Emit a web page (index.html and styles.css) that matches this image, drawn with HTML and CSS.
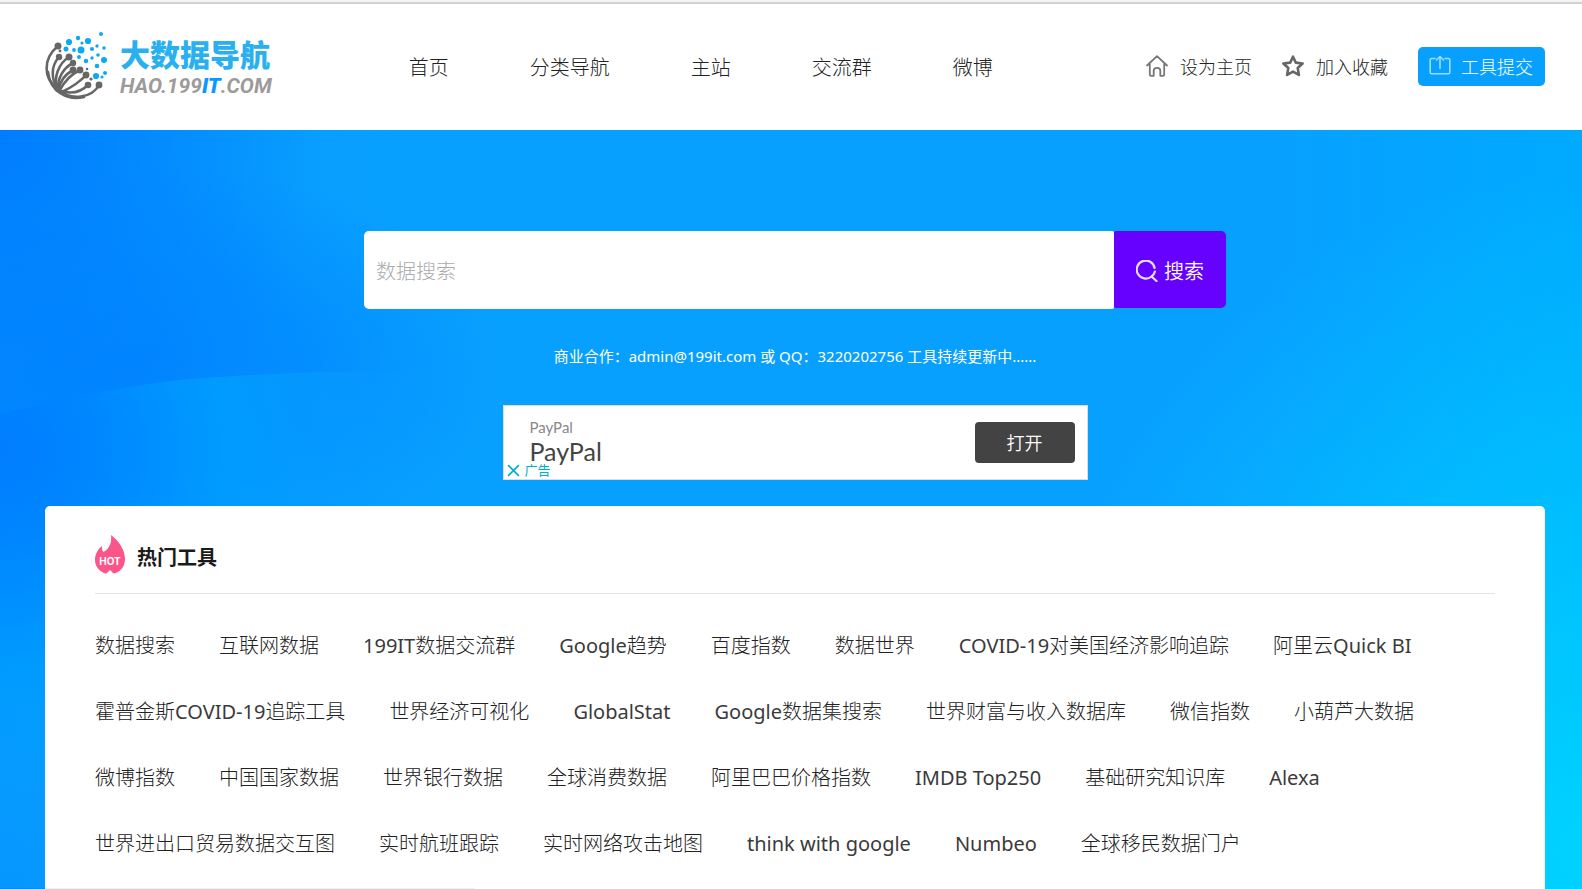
FILE: index.html
```html
<!DOCTYPE html>
<html lang="zh-CN">
<head>
<meta charset="utf-8">
<title>大数据导航</title>
<link rel="stylesheet" href="styles.css">
</head>
<body>
<header class="header">
  <a class="logo" href="#">
    <svg class="logo-mark" viewBox="0 0 62 68" aria-hidden="true">
      <g fill="none" stroke="#666" stroke-width="2.6" stroke-linecap="round">
        <path d="M12 14C-4 27 -2 48 11 55"/>
        <path d="M13 25C4 35 6 48 11 55"/>
        <path d="M23 25C12 32 8 45 11 56"/>
        <path d="M27 31C17 36 12 46 12 56"/>
        <path d="M27 38C20 42 14 49 13 57"/>
        <path d="M34 38C26 42 18 50 14 58"/>
        <path d="M40 43C34 50 24 56 16 60"/>
        <path d="M42 53C35 60 25 62 15 59"/>
        <path d="M53 53C46 66 25 69 13 58"/>
        <path d="M2 40C4 60 22 69 38 65"/>
      </g>
      <g fill="#666">
        <circle cx="12" cy="14" r="3.5"/><circle cx="13" cy="25" r="3.2"/><circle cx="23" cy="25" r="3.5"/>
        <circle cx="27" cy="31" r="3.2"/><circle cx="27" cy="38" r="3.4"/><circle cx="34" cy="38" r="3.4"/>
        <circle cx="40" cy="43" r="3.4"/><circle cx="42" cy="53" r="3.3"/><circle cx="53" cy="53" r="3.4"/>
        <circle cx="14" cy="19" r="1.4"/><circle cx="41" cy="37" r="1.3"/><circle cx="45" cy="47" r="1.6"/>
      </g>
      <g fill="#0da9f2">
        <circle cx="55" cy="2" r="2"/><circle cx="32" cy="6" r="2.2"/><circle cx="23" cy="10" r="3.1"/><circle cx="42" cy="9" r="3.1"/>
        <circle cx="36" cy="11" r="1.6"/><circle cx="20" cy="17" r="2.5"/><circle cx="28" cy="18" r="1.9"/><circle cx="35" cy="18" r="3.5"/>
        <circle cx="46" cy="17" r="2.1"/><circle cx="51" cy="14" r="1.7"/><circle cx="58" cy="16" r="1.8"/><circle cx="33" cy="25" r="2"/>
        <circle cx="46" cy="26" r="1.7"/><circle cx="52" cy="23" r="1.8"/><circle cx="40" cy="29" r="2.3"/><circle cx="58" cy="28" r="3"/>
        <circle cx="51" cy="34" r="2.3"/><circle cx="59" cy="41" r="2"/><circle cx="50" cy="44" r="3.1"/><circle cx="56" cy="45" r="1.6"/>
      </g>
    </svg>
    <span class="logo-text">
      <span class="logo-name">大数据导航</span>
      <span class="logo-domain">HAO.199<b class="logo-it">IT</b>.COM</span>
    </span>
  </a>
  <nav class="nav">
    <a href="#">首页</a>
    <a href="#">分类导航</a>
    <a href="#">主站</a>
    <a href="#">交流群</a>
    <a href="#">微博</a>
  </nav>
  <div class="actions">
    <a class="action" href="#">
      <svg class="icon" viewBox="0 0 22 22" fill="none" stroke="#777" stroke-width="1.8" stroke-linecap="round" stroke-linejoin="round" aria-hidden="true"><path d="M1 10.500L11 1.200L21 10.500M3.800 9V19.500Q3.800 20.800 5.100 20.800H7.700V15.500Q7.700 12.800 11 12.800T14.300 15.500V20.800H16.900Q18.200 20.800 18.200 19.500V9"/></svg>
      设为主页
    </a>
    <a class="action" href="#">
      <svg class="icon" viewBox="0 0 22 22" fill="none" stroke="#666" stroke-width="2.6" stroke-linejoin="round" aria-hidden="true"><path d="M11 1.700L13.800 7.600L20.600 8.500L15.700 13L16.900 19.900L11 16.600L5.100 19.900L6.300 13L1.400 8.500L8.200 7.600Z"/></svg>
      加入收藏
    </a>
    <a class="submit" href="#">
      <svg class="icon" viewBox="0 0 22 22" fill="none" stroke="#9bdcff" stroke-width="1.6" stroke-linecap="round" stroke-linejoin="round" aria-hidden="true"><path d="M6 3.500H2.500Q1.200 3.500 1.200 4.800V17.500Q1.200 18.800 2.500 18.800H19.500Q20.800 18.800 20.800 17.500V4.800Q20.800 3.500 19.500 3.500H16M11 13.500V2M7.500 5L11 1.500L14.500 5"/></svg>
      工具提交
    </a>
  </div>
</header>
<main class="hero">
  <svg class="wave" viewBox="0 0 500 759" preserveAspectRatio="none" aria-hidden="true">
    <defs>
      <radialGradient id="wave-fill" gradientUnits="userSpaceOnUse" cx="0" cy="320" r="440">
        <stop offset="0" stop-color="#007dff"/>
        <stop offset="0.2" stop-color="#0086ff"/>
        <stop offset="0.5" stop-color="#009bff"/>
        <stop offset="0.75" stop-color="#069fff" stop-opacity="0.5"/>
        <stop offset="1" stop-color="#08a0ff" stop-opacity="0"/>
      </radialGradient>
    </defs>
    <path fill="url(#wave-fill)" d="M0 284C70 267 150 251 200 248C300 241 400 240 500 240V759H0Z"/>
  </svg>
  <form class="search">
    <input class="search-input" type="text" placeholder="数据搜索" aria-label="数据搜索">
    <button class="search-button" type="button">
      <svg class="icon" viewBox="0 0 22 22" fill="none" stroke="#e8dcff" stroke-width="2.2" stroke-linecap="round" aria-hidden="true"><path d="M18.600 8A9 9 0 1 0 15.500 16.500L20.500 21M15.500 16.500Q18.200 14.500 18.900 11.500"/></svg>
      搜索
    </button>
  </form>
  <p class="contact">商业合作：admin@199it.com 或 QQ：3220202756 工具持续更新中......</p>
  <aside class="ad">
    <div class="ad-copy">
      <span class="ad-brand">PayPal</span>
      <span class="ad-title">PayPal</span>
    </div>
    <button class="ad-button" type="button">打开</button>
    <span class="ad-label">
      <svg class="ad-close" viewBox="0 0 12 12" stroke="#00aecd" stroke-width="1.500" aria-hidden="true"><path d="M1 1L11 11M11 1L1 11"/></svg>
      广告
    </span>
  </aside>
  <section class="card">
    <h2 class="card-title">
      <svg class="flame" viewBox="0 0 30 39" aria-hidden="true">
        <path fill="#fb558a" d="M16 0C24 6 30 15 30 24C30 31 26 36 21 38Q18.500 39 17.500 37.500L16.500 36.500Q15 34 13.500 36.500L12.500 37.500Q11.500 39 9 38C4 36 0 31 0 25C0 19 3 14 7 11Q6.500 15 8.500 17C15 13 17 7 16 0Z"/>
        <text class="flame-text" x="15" y="29.500" text-anchor="middle">HOT</text>
      </svg>
      <span class="card-name">热门工具</span>
    </h2>
    <div class="links">
      <a href="#">数据搜索</a>
      <a href="#">互联网数据</a>
      <a href="#"><span class="latin">199IT</span>数据交流群</a>
      <a href="#"><span class="latin">Google</span>趋势</a>
      <a href="#">百度指数</a>
      <a href="#">数据世界</a>
      <a href="#"><span class="latin">COVID-19</span>对美国经济影响追踪</a>
      <a href="#">阿里云<span class="latin">Quick BI</span></a>
      <a href="#">霍普金斯<span class="latin">COVID-19</span>追踪工具</a>
      <a href="#">世界经济可视化</a>
      <a class="latin" href="#">GlobalStat</a>
      <a href="#"><span class="latin">Google</span>数据集搜索</a>
      <a href="#">世界财富与收入数据库</a>
      <a href="#">微信指数</a>
      <a href="#">小葫芦大数据</a>
      <a href="#">微博指数</a>
      <a href="#">中国国家数据</a>
      <a href="#">世界银行数据</a>
      <a href="#">全球消费数据</a>
      <a href="#">阿里巴巴价格指数</a>
      <a class="latin" href="#">IMDB Top250</a>
      <a href="#">基础研究知识库</a>
      <a class="latin" href="#">Alexa</a>
      <a href="#">世界进出口贸易数据交互图</a>
      <a href="#">实时航班跟踪</a>
      <a href="#">实时网络攻击地图</a>
      <a class="latin" href="#">think with google</a>
      <a class="latin" href="#">Numbeo</a>
      <a href="#">全球移民数据门户</a>
    </div>
  </section>
</main>
<div class="status-edge"></div>
</body>
</html>
```
FILE: styles.css
```css
* { box-sizing: border-box; }
body {
  margin: 0;
  min-height: 100vh;
  display: flex;
  flex-direction: column;
  font-family: "Noto Sans", "Noto Sans CJK SC", sans-serif;
  font-weight: 300;
  color: #222;
}
a { color: inherit; text-decoration: none; }
button, input { font: inherit; border: 0; }
.icon { width: 22px; height: 22px; flex: none; }
.latin { font-weight: 400; color: #3a3a3a; }

.header {
  display: flex;
  align-items: center;
  height: 130px;
  border-top: 2px solid #f4f4f4;
  padding: 0 37px 0 45px;
  box-shadow: inset 0 2px #d2d2d2;
  background: #fff;
}
.logo { display: flex; align-items: center; gap: 11px; flex: 0 0 226px; }
.logo-mark { width: 64px; height: 68px; flex: none; }
.logo-text { display: flex; flex-direction: column; padding-top: 6px; }
.logo-name { font-size: 30px; line-height: 34px; font-weight: 900; color: #29b0ee; }
.logo-domain {
  font: italic bold 21px/28px Roboto, "Liberation Sans", sans-serif;
  color: #9d9a9a;
}
.logo-it { color: #0a97ff; }
.nav { display: flex; gap: 81px; margin-left: 137px; font-size: 20px; }
.actions { display: flex; align-items: center; gap: 30px; margin-left: auto; font-size: 18px; }
.action, .submit { display: flex; align-items: center; gap: 12px; }
.submit {
  height: 39px;
  gap: 10px;
  padding: 0 12px 0 11px;
  border-radius: 5px;
  background: #08a0ff;
  color: #fff;
}

.hero {
  position: relative;
  flex: 1;
  display: flex;
  flex-direction: column;
  align-items: center;
  padding: 101px 37px 0 45px;
  background:
    radial-gradient(ellipse 24% 28% at 8% 32%, rgba(0, 128, 255, .8), rgba(0, 128, 255, .5) 50%, transparent),
    radial-gradient(ellipse 20% 50% at 0 0, #007dff, transparent),
    radial-gradient(ellipse 36% 90% at 100% 95%, #00d2ff, transparent),
    linear-gradient(90deg, #0696ff, #08a0ff 25%, #08a0ff 80%, #00aaff);
}
.wave { position: absolute; left: 0; top: 0; width: 32%; height: 100%; }
.search, .ad, .card, .contact { position: relative; }
.search { display: flex; align-items: flex-start; width: 862px; max-width: 100%; }
.search-input {
  flex: 1;
  min-width: 0;
  height: 78px;
  padding: 2px 12px 0;
  border-radius: 5px 2px 2px 5px;
  background: #fff;
  font-size: 20px;
}
.search-input::placeholder { color: #aaa; opacity: 1; }
.search-button {
  display: flex;
  align-items: center;
  justify-content: center;
  gap: 6px;
  width: 112px;
  height: 77px;
  padding: 2px 0 0;
  border-radius: 2px 5px 5px 2px;
  background: #6600ff;
  color: #fff;
  font-size: 20px;
  font-weight: 350;
}
.contact { margin: 35px 0 37px; font-size: 15px; line-height: 24px; font-weight: 400; color: #fff; }
.ad {
  display: flex;
  align-items: center;
  justify-content: space-between;
  width: 585px;
  max-width: 100%;
  height: 75px;
  padding: 0 12px 0 26px;
  border: 1px solid #dcdcdc;
  background: #fff;
}
.ad-copy { display: flex; flex-direction: column; padding-bottom: 3px; font-family: Lato, sans-serif; font-weight: 400; }
.ad-brand { font-size: 15px; line-height: 20px; color: #888; }
.ad-title { font-size: 25px; line-height: 28px; color: #444; }
.ad-button {
  width: 100px;
  height: 41px;
  padding: 0 0 2px;
  border-radius: 4px;
  background: #434343;
  color: #fff;
  font-size: 18px;
  font-weight: 350;
}
.ad-label {
  position: absolute;
  left: 0;
  bottom: 0;
  display: flex;
  align-items: center;
  gap: 5px;
  padding-left: 3px;
  font-size: 13px;
  line-height: 18px;
  font-weight: 400;
  color: #00aecd;
}
.ad-close { width: 13px; height: 13px; }
.card {
  flex: 1;
  align-self: stretch;
  margin-top: 26px;
  padding: 0 50px;
  border-radius: 5px 5px 0 0;
  background: #fff;
}
.card-title {
  display: flex;
  align-items: center;
  gap: 12px;
  margin: 0;
  padding: 28px 0 18px;
  border-bottom: 1px solid #e4e4e4;
  font-size: 20px;
  line-height: 35px;
  font-weight: 700;
  color: #1a1a1a;
}
.card-name { padding-top: 6px; }
.flame { width: 30px; height: 39px; }
.flame-text { font: bold 10px Inter, sans-serif; fill: #fff; }
.links {
  display: flex;
  flex-wrap: wrap;
  column-gap: 44px;
  padding-top: 19px;
  font-size: 20px;
  line-height: 66px;
}
.status-edge {
  position: fixed;
  left: 0;
  bottom: 0;
  width: 30%;
  height: 1px;
  background: rgba(0, 0, 0, .05);
}
```
